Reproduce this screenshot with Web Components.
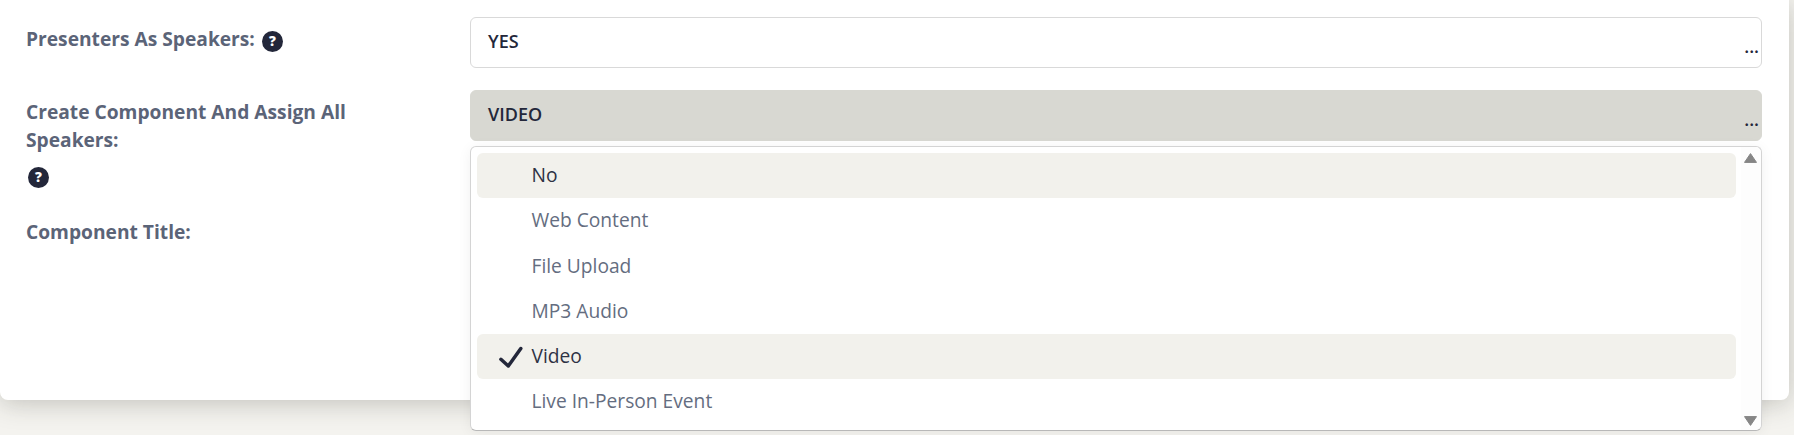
<!DOCTYPE html>
<html>
<head>
<meta charset="utf-8">
<title>Form</title>
<style>
    html, body { margin: 0; height: 435px; overflow: hidden; background: #f4f3ef; }
    body { font-family: "Open Sans", "Liberation Sans", sans-serif; }
</style>
</head>
<body>
<form-card>
    <form-row>
        <help-label has-help inline>Presenters As Speakers:</help-label>
        <select-box value="YES"></select-box>
    </form-row>
    <form-row>
        <help-label has-help>Create Component And Assign All Speakers:</help-label>
        <select-box value="VIDEO" open>
            <option-menu>
                <menu-item hover>No</menu-item>
                <menu-item>Web Content</menu-item>
                <menu-item>File Upload</menu-item>
                <menu-item>MP3 Audio</menu-item>
                <menu-item checked hover>Video</menu-item>
                <menu-item>Live In-Person Event</menu-item>
            </option-menu>
        </select-box>
    </form-row>
    <form-row>
        <help-label>Component Title:</help-label>
        <text-field></text-field>
    </form-row>
</form-card>

<script>
class FormCard extends HTMLElement {
    constructor() {
        super();
        this.attachShadow({ mode: 'open' });
        this.shadowRoot.innerHTML = `
            <style>
                :host {
                    display: flex;
                    flex-direction: column;
                    gap: 22px;
                    box-sizing: border-box;
                    width: 1789px;
                    height: 400px;
                    padding: 17px 27px 0 26px;
                    background: #fff;
                    border-radius: 0 0 8px 8px;
                    box-shadow: 0 3px 26px rgba(50, 50, 40, .26);
                }
            </style>
            <slot></slot>
        `;
    }
}

class FormRow extends HTMLElement {
    constructor() {
        super();
        this.attachShadow({ mode: 'open' });
        this.shadowRoot.innerHTML = `
            <style>
                :host {
                    display: grid;
                    grid-template-columns: 444px 1fr;
                    align-items: start;
                }
            </style>
            <slot></slot>
        `;
    }
}

class HelpLabel extends HTMLElement {
    constructor() {
        super();
        this.attachShadow({ mode: 'open' });
        const help = this.hasAttribute('has-help');
        const inline = this.hasAttribute('inline');
        this.shadowRoot.innerHTML = `
            <style>
                :host {
                    display: block;
                    width: 340px;
                    padding-top: 8px;
                    font-size: 19.2px;
                    font-weight: 700;
                    line-height: 28px;
                    color: #5b6478;
                }
                svg { width: 21px; height: 21px; display: ${inline ? 'inline-block' : 'block'}; }
                .inline { vertical-align: -6px; margin-left: 2px; }
                .below { margin: 13px 0 0 2px; }
            </style>
            <slot></slot>${help ? `
            <svg class="${inline ? 'inline' : 'below'}" viewBox="0 0 20 20">
                <circle cx="10" cy="10" r="10" fill="#23273a"/>
                <text x="10" y="14.5" text-anchor="middle" font-size="13" font-weight="800" fill="#fff" font-family="Open Sans">?</text>
            </svg>` : ''}
        `;
    }
}

class SelectBox extends HTMLElement {
    constructor() {
        super();
        this.attachShadow({ mode: 'open' });
        const open = this.hasAttribute('open');
        this.shadowRoot.innerHTML = `
            <style>
                :host { display: block; position: relative; }
                .box {
                    box-sizing: border-box;
                    height: 51px;
                    padding: 0 17px 4px;
                    display: flex;
                    align-items: center;
                    border: 1px solid ${open ? '#d8d8d2' : '#d9d9d9'};
                    border-radius: 6px;
                    background: ${open ? '#d8d8d2' : '#fff'};
                    color: #23273a;
                    font-size: 18px;
                    font-weight: 600;
                }
                .dots {
                    position: absolute;
                    right: 3px;
                    bottom: 13px;
                    font-size: 18px;
                    font-weight: 600;
                    line-height: 18px;
                    color: #23273a;
                }
            </style>
            <div class="box">${this.getAttribute('value')}</div>
            <div class="dots">...</div>
            <slot></slot>
        `;
    }
}

class OptionMenu extends HTMLElement {
    constructor() {
        super();
        this.attachShadow({ mode: 'open' });
        this.shadowRoot.innerHTML = `
            <style>
                :host {
                    position: absolute;
                    z-index: 5;
                    top: 56px;
                    left: 0;
                    right: 0;
                    height: 285px;
                    box-sizing: border-box;
                    display: grid;
                    grid-template-columns: 1fr 20px;
                    background: #fff;
                    border: 1px solid #d4d4d4;
                    border-bottom-color: #b8b8b8;
                    border-radius: 6px;
                    box-shadow: 0 2px 14px rgba(0, 0, 0, .06);
                }
                .list {
                    display: flex;
                    flex-direction: column;
                    padding: 6px 5px 0 6px;
                }
                .bar {
                    position: relative;
                    background: #fdfdfd;
                    border-radius: 0 6px 6px 0;
                }
                .bar svg { position: absolute; left: 3px; width: 13px; height: 10px; fill: #868686; }
                .up { top: 6px; }
                .down { bottom: 4px; }
            </style>
            <div class="list"><slot></slot></div>
            <div class="bar">
                <svg class="up" viewBox="0 0 13 10"><path d="M6.5 0.6 L12.5 9.4 H0.5 Z" stroke="#868686" stroke-width="1" stroke-linejoin="round"/></svg>
                <svg class="down" viewBox="0 0 13 10"><path d="M0.5 0.6 H12.5 L6.5 9.4 Z" stroke="#868686" stroke-width="1" stroke-linejoin="round"/></svg>
            </div>
        `;
    }
}

class MenuItem extends HTMLElement {
    constructor() {
        super();
        this.attachShadow({ mode: 'open' });
        const hover = this.hasAttribute('hover');
        const checked = this.hasAttribute('checked');
        this.shadowRoot.innerHTML = `
            <style>
                :host {
                    display: flex;
                    align-items: center;
                    flex: none;
                    position: relative;
                    box-sizing: border-box;
                    height: 45.25px;
                    padding: 0 0 2px 54.5px;
                    border-radius: 6px;
                    font-size: 19.2px;
                    background: ${hover ? '#f2f1ec' : 'transparent'};
                    color: ${hover ? '#2e3244' : '#646d80'};
                }
                svg {
                    position: absolute;
                    left: 22px;
                    top: 12px;
                    width: 25px;
                    height: 22px;
                }
            </style>
            ${checked ? `<svg viewBox="0 0 25 22"><path d="M1.9 13.3 L9.3 20 L21.8 2.5" fill="none" stroke="#23273a" stroke-width="3.5" stroke-linecap="round" stroke-linejoin="round"/></svg>` : ''}
            <slot></slot>
        `;
    }
}

class TextField extends HTMLElement {
    constructor() {
        super();
        this.attachShadow({ mode: 'open' });
        this.shadowRoot.innerHTML = `
            <style>
                :host {
                    display: flex;
                    flex-direction: column;
                    gap: 42px;
                }
                div {
                    box-sizing: border-box;
                    height: 51px;
                    border: 1px solid #b4b4b4;
                    border-radius: 6px;
                    background: #fff;
                }
            </style>
            <div></div>
            <div></div>
        `;
    }
}

customElements.define('form-card', FormCard);
customElements.define('form-row', FormRow);
customElements.define('help-label', HelpLabel);
customElements.define('select-box', SelectBox);
customElements.define('option-menu', OptionMenu);
customElements.define('menu-item', MenuItem);
customElements.define('text-field', TextField);
</script>
</body>
</html>
